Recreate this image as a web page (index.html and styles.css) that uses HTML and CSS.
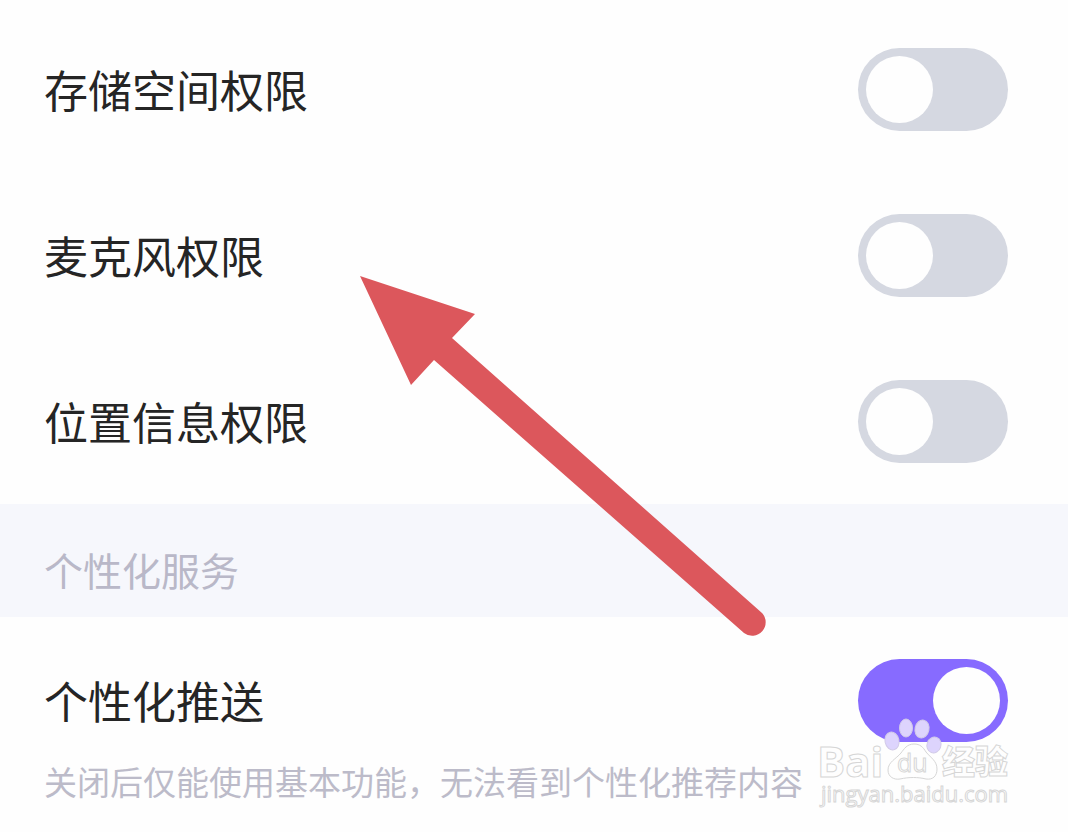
FILE: index.html
```html
<!DOCTYPE html>
<html lang="zh-CN">
<head>
  <meta charset="UTF-8">
  <meta name="viewport" content="width=device-width, initial-scale=1.0">
  <title>权限设置</title>
  <link rel="stylesheet" href="styles.css">
</head>
<body>
  <main class="settings">
    <section class="group">
      <div class="row">
        <label for="storage">存储空间权限</label>
        <input class="switch" type="checkbox" id="storage">
      </div>
      <div class="row">
        <label for="mic">麦克风权限</label>
        <input class="switch" type="checkbox" id="mic">
      </div>
      <div class="row">
        <label for="location">位置信息权限</label>
        <input class="switch" type="checkbox" id="location">
      </div>
    </section>
    <h2 class="group-title">个性化服务</h2>
    <section class="group-push">
      <div class="row">
        <label for="push">个性化推送</label>
        <input class="switch" type="checkbox" id="push" checked>
      </div>
      <p class="note">关闭后仅能使用基本功能，无法看到个性化推荐内容</p>
      <svg class="watermark" width="200" height="100" viewBox="0 0 200 100">
        <g class="paw">
          <ellipse cx="76" cy="26" rx="7" ry="9" transform="rotate(-12 76 26)"/>
          <ellipse cx="90" cy="13" rx="6.500" ry="9"/>
          <ellipse cx="106" cy="14" rx="7" ry="9" transform="rotate(12 106 14)"/>
          <ellipse cx="118" cy="30" rx="7" ry="8" transform="rotate(20 118 30)"/>
        </g>
        <path class="mark" d="M98 29C91 29 88 34 85 38C80 44 72 47 72 55C72 62 78 65 84 64C93 62 102 62 110 64C117 65 121 61 121 54C121 46 115 43 110 37C107 32 104 29 98 29Z"/>
        <text class="mark brand" x="1" y="62">Bai</text>
        <text class="mark du" x="81" y="57">du</text>
        <text class="mark jingyan" x="126" y="59">经验</text>
        <text class="mark site" x="5" y="87">jingyan.baidu.com</text>
      </svg>
    </section>
    <svg class="arrow" width="408" height="362" viewBox="0 0 408 362">
      <path d="M0 0L115 38L92 62L402 337A13.500 13.500 0 0 1 384 357L74 84L51 109Z"/>
    </svg>
  </main>
</body>
</html>
```
FILE: styles.css
```css
* {
  box-sizing: border-box;
}
body {
  margin: 0;
  background-color: #fefefe;
  color: #252525;
  font-family: "Noto Sans CJK SC", sans-serif;
}
.settings {
  position: relative;
  overflow: hidden;
}
.group {
  padding-top: 6px;
}
.row {
  display: flex;
  align-items: center;
  justify-content: space-between;
  height: 166px;
  padding: 0 60px 0 44px;
}
.row label {
  font-size: 44px;
  line-height: 64px;
}
.switch {
  appearance: none;
  display: flex;
  flex-shrink: 0;
  width: 150px;
  height: 83px;
  margin: 0;
  padding: 8px;
  border-radius: 42px;
  background-color: #d5d8e1;
  cursor: pointer;
}
.switch::before {
  content: "";
  width: 67px;
  height: 67px;
  border-radius: 50%;
  background-color: #fefefe;
}
.switch:checked {
  justify-content: flex-end;
  background-color: #876bff;
}
.group-title {
  margin: 0;
  padding: 37px 44px 20px;
  background-color: #f6f7fc;
  color: #b9b8c8;
  font-size: 39px;
  font-weight: 400;
  line-height: 56px;
}
.group-push {
  position: relative;
  padding-bottom: 26px;
}
.note {
  margin: -26px 0 0;
  padding: 0 44px;
  color: #bcbbc9;
  font-size: 33px;
  line-height: 48px;
}
.watermark {
  position: absolute;
  top: 98px;
  right: 52px;
  overflow: visible;
  pointer-events: none;
}
.paw {
  fill: #ddd4fd;
  stroke: #d2cbe8;
}
.mark {
  fill: #fefefe;
  stroke: #d6d6d6;
}
.brand {
  font: 700 42px "Open Sans", sans-serif;
}
.du {
  font: 400 25px "Open Sans", sans-serif;
}
.jingyan {
  font: 900 33px "Noto Sans CJK SC", sans-serif;
}
.site {
  font: 400 22px "Open Sans", sans-serif;
}
.arrow {
  position: absolute;
  top: 276px;
  left: 360px;
  fill: #dc575c;
  pointer-events: none;
}
```
